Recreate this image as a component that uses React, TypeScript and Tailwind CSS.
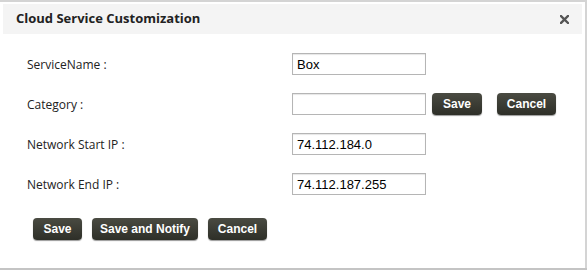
import React from "react";

const labelFont = { fontFamily: '"Open Sans", "Noto Sans", sans-serif' };

function DarkButton({ children, className = "" }: { children: React.ReactNode; className?: string }) {
  return (
    <button
      className={`h-[22px] rounded-[4px] bg-gradient-to-b from-[#4a4b42] to-[#2e2f28] text-[12px] font-bold text-white shadow-[0_1px_1px_rgba(0,0,0,0.4)] font-['Liberation_Sans',Arial,sans-serif] ${className}`}
    >
      {children}
    </button>
  );
}

function Field({ label, value }: { label: string; value: string }) {
  return (
    <div className="flex h-[22px] items-center">
      <div className="w-[265px] pt-[1px] text-[12px] text-[#222]" style={labelFont}>
        {label}
      </div>
      <input
        readOnly
        value={value}
        className="h-[22px] w-[134px] border border-[#b5b5b5] bg-white px-[4px] text-[13px] text-black outline-none shadow-[inset_0_1px_1px_rgba(0,0,0,0.1)] font-['Liberation_Sans',Arial,sans-serif]"
      />
    </div>
  );
}

export default function App() {
  return (
    <div className="h-[270px] w-[587px] overflow-hidden bg-white">
      <div className="flex h-[268px] flex-col border-t-2 border-r-2 border-[#d4d4d4] bg-white pt-[2px]">
        {/* header */}
        <div className="mx-[3px] flex h-[30px] items-center justify-between bg-[#f4f4f4] pl-[13px] pr-[13px]">
          <span className="text-[13px] font-bold text-[#222]" style={labelFont}>
            Cloud Service Customization
          </span>
          <svg width="9" height="9" viewBox="0 0 9 9" className="mt-[1px]">
            <path d="M1 1L8 8M8 1L1 8" stroke="#555" strokeWidth="2.4" strokeLinecap="square" />
          </svg>
        </div>

        <div className="flex flex-col gap-[18px] pl-[27px] pt-[19px]">
          <Field label="ServiceName :" value="Box" />
          <div className="flex items-center">
            <Field label="Category :" value="" />
            <DarkButton className="ml-[6px] w-[50px]">Save</DarkButton>
            <DarkButton className="ml-[15px] w-[59px]">Cancel</DarkButton>
          </div>
          <Field label="Network Start IP :" value="74.112.184.0" />
          <Field label="Network End IP :" value="74.112.187.255" />
        </div>

        <div className="mt-[23px] flex gap-[10px] pl-[33px]">
          <DarkButton className="w-[49px]">Save</DarkButton>
          <DarkButton className="w-[106px]">Save and Notify</DarkButton>
          <DarkButton className="w-[59px]">Cancel</DarkButton>
        </div>
      </div>
      <div className="h-[2px] bg-[#c4c4c4]" />
    </div>
  );
}
